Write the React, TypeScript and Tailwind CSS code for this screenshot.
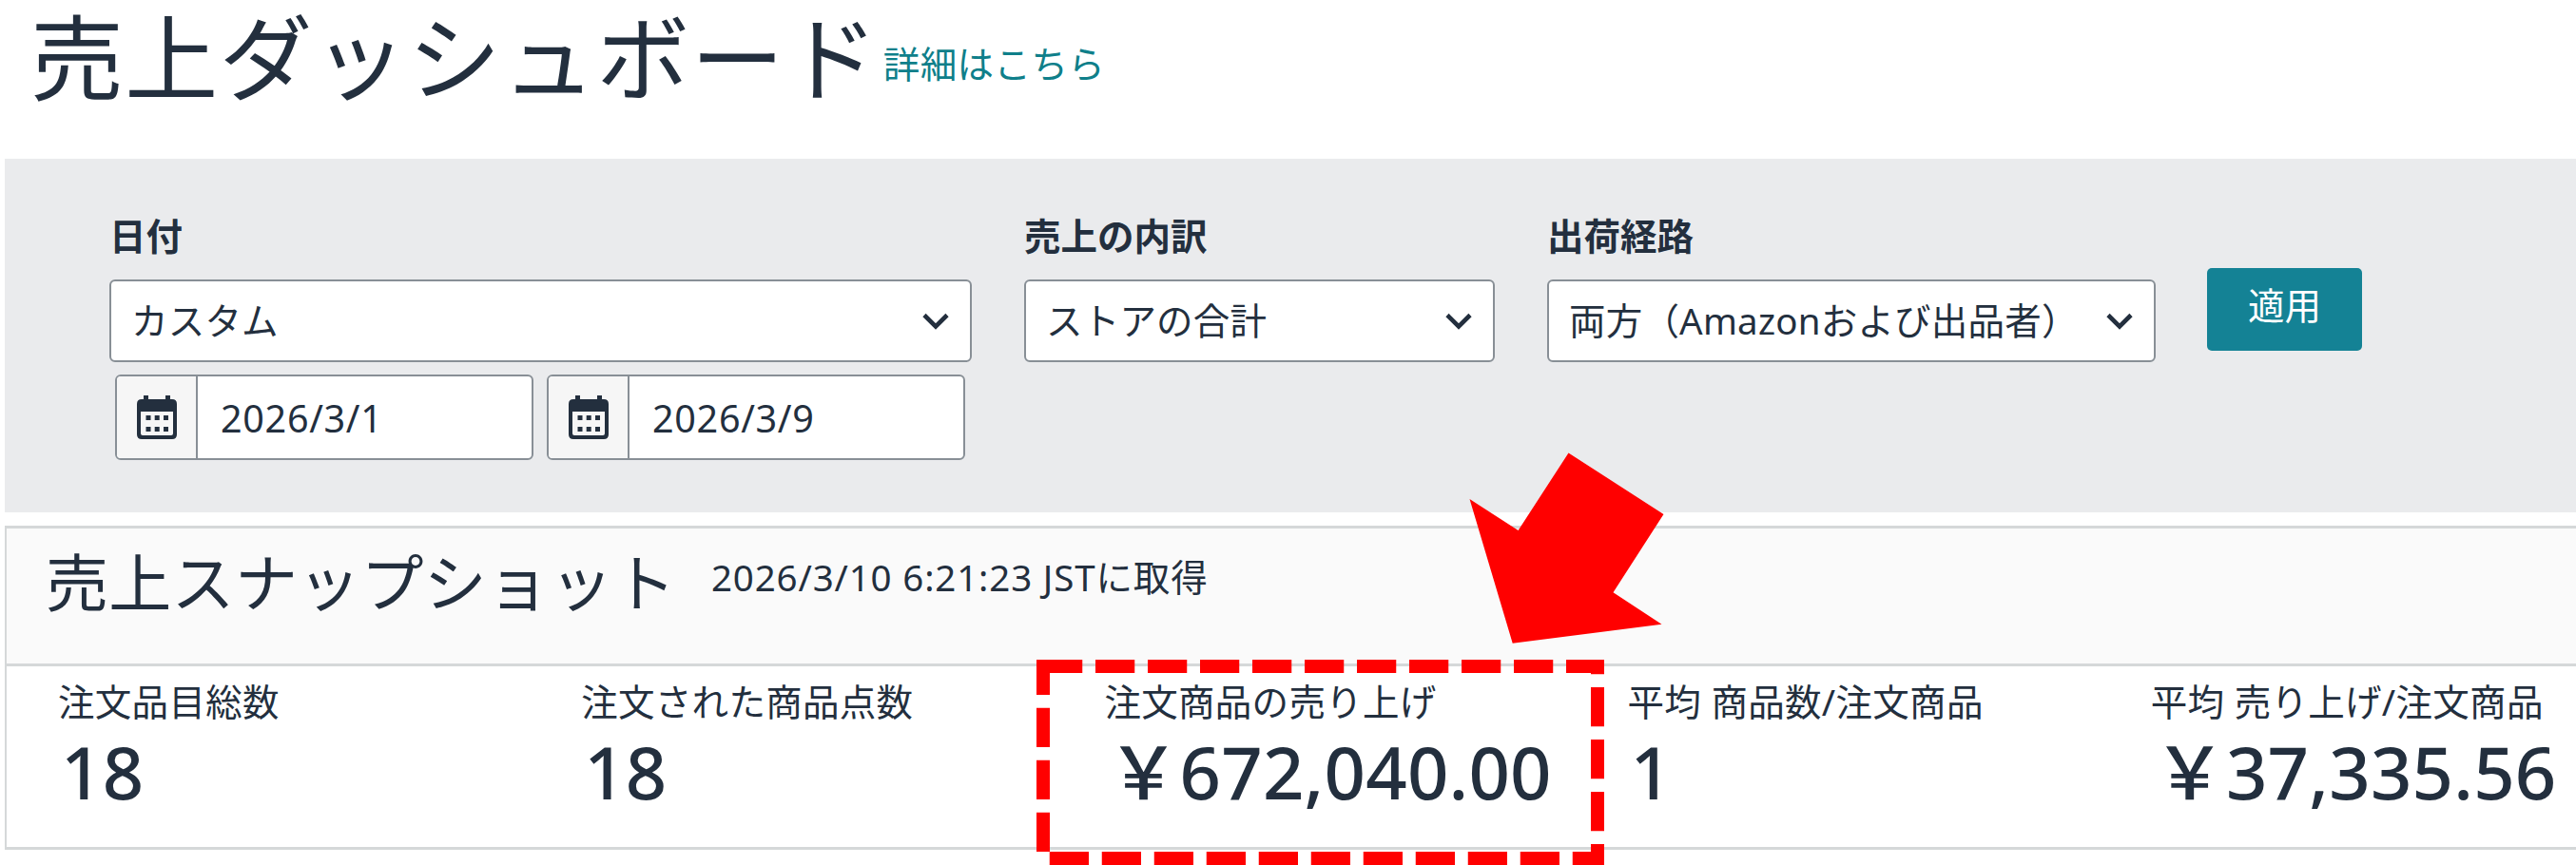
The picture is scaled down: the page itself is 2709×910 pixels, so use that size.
import type { ReactNode } from "react";

const metrics = [
  { label: "注文品目総数", value: "18" },
  { label: "注文された商品点数", value: "18" },
  { label: "注文商品の売り上げ", value: "￥672,040.00" },
  { label: "平均 商品数/注文商品", value: "1" },
  { label: "平均 売り上げ/注文商品", value: "￥37,335.56" },
];

function ChevronIcon() {
  return (
    <svg width="30" height="20" viewBox="0 0 30 20" fill="none" aria-hidden>
      <path d="M3 3.5 L15 15.5 L27 3.5" stroke="#232f3e" strokeWidth="4.6" />
    </svg>
  );
}

function CalendarIcon() {
  return (
    <svg width="42" height="46" viewBox="0 0 42 46" aria-hidden>
      <path
        fill="#232f3e"
        fillRule="evenodd"
        d="M7 0h5v4h18V0h5v4h2q5 0 5 5v32q0 5-5 5H5q-5 0-5-5V9q0-5 5-5h2z M4 17v23q0 2 2 2h30q2 0 2-2V17z"
      />
      {[21, 33].map((y) =>
        [9.5, 18.7, 28].map((x) => (
          <rect key={`${x}-${y}`} x={x} y={y} width="5" height="5" fill="#232f3e" />
        ))
      )}
    </svg>
  );
}

function Field({ label, className, children }: { label: string; className: string; children: ReactNode }) {
  return (
    <div className={className}>
      <div className="h-[60px] text-[38.5px] leading-[58px] font-bold">{label}</div>
      <div className="mt-[15px]">{children}</div>
    </div>
  );
}

function Select({ value }: { value: string }) {
  return (
    <button
      type="button"
      className="flex h-[87px] w-full items-center justify-between rounded-[6px] border-x-2 border-y-[2.5px] border-[#888f96] bg-white pr-[21px] pl-[21px] text-[38.5px] leading-none tracking-[0.2px]"
    >
      <span className="whitespace-nowrap">{value}</span>
      <ChevronIcon />
    </button>
  );
}

function DateInput({ value }: { value: string }) {
  return (
    <div className="flex h-[90px] w-[440px] overflow-hidden rounded-[6px] border-2 border-[#888f96] bg-white">
      <div className="flex w-[85px] items-center justify-center border-r-2 border-[#888f96] bg-[#f6f6f6]">
        <CalendarIcon />
      </div>
      <span className="flex items-center pt-1 pl-[24px] text-[39.5px] leading-none tracking-[0.7px]">{value}</span>
    </div>
  );
}

/** Red dashed frame and arrow that call out the ordered product sales */
function Callout() {
  return (
    <svg className="pointer-events-none absolute top-0 left-0" width="2709" height="910" aria-hidden>
      <path
        d="M1097 701H1680V903H1097Z"
        fill="none"
        stroke="#ff0000"
        strokeWidth="14"
        strokeDasharray="41.25 13.75"
      />
      <path
        d="M1649.5 476.5L1749.5 541L1696.5 623.3L1747.5 656.7L1590.7 676.8L1545.5 525L1596.6 558Z"
        fill="#ff0000"
      />
    </svg>
  );
}

export default function App() {
  return (
    <main className="relative h-[910px] w-[2709px] overflow-hidden bg-white font-['Noto_Sans','Noto_Sans_CJK_JP',sans-serif] text-[#232f3e]">
      <header className="flex h-[167px] items-start pl-[32px]">
        <h1 className="text-[98px] leading-[120px] tracking-[1.2px]">売上ダッシュボード</h1>
        <a className="mt-[37px] ml-[4px] text-[38.5px] leading-[60px] tracking-[0.4px] text-[#0f7f8a]">詳細はこちら</a>
      </header>

      <section className="ml-[5px] flex h-[372px] items-start bg-[#eaebed] pt-[52px] pl-[110px]">
        <Field label="日付" className="w-[907px]">
          <Select value="カスタム" />
          <div className="mt-[13px] flex gap-3.5 pl-[6px]">
            <DateInput value="2026/3/1" />
            <DateInput value="2026/3/9" />
          </div>
        </Field>
        <Field label="売上の内訳" className="ml-[55px] w-[495px]">
          <Select value="ストアの合計" />
        </Field>
        <Field label="出荷経路" className="ml-[55px] w-[640px]">
          <Select value="両方（Amazonおよび出品者）" />
        </Field>
        <button
          type="button"
          className="mt-[63px] ml-[54px] h-[87px] w-[163px] rounded-[5px] bg-[#148295] pb-2 text-[38.5px] leading-none text-white"
        >
          適用
        </button>
      </section>

      <section className="mt-3.5 ml-[5px] h-[341px] border-y-[3px] border-l-2 border-[#d5d8d9]">
        <div className="flex h-[145px] items-start border-b-[3px] border-[#d5d8d9] bg-[#fafafa] pl-[41px]">
          <h2 className="mt-[16px] text-[66px] leading-[80px] tracking-[0.3px]">売上スナップショット</h2>
          <span className="mt-[21px] ml-[37px] text-[38.5px] leading-[60px] tracking-[0.85px]">
            2026/3/10 6:21:23 JSTに取得
          </span>
        </div>
        <div className="flex pl-[54px]">
          {metrics.map(({ label, value }, i) => (
            <div key={i} className="w-[550.2px] shrink-0 whitespace-nowrap">
              <div className="mt-[7px] text-[38.5px] leading-[60px] tracking-[0.3px]">{label}</div>
              <div className="pl-[3px] text-[76px] leading-[88px] font-medium tracking-[0.2px]">{value}</div>
            </div>
          ))}
        </div>
      </section>

      <Callout />
    </main>
  );
}
